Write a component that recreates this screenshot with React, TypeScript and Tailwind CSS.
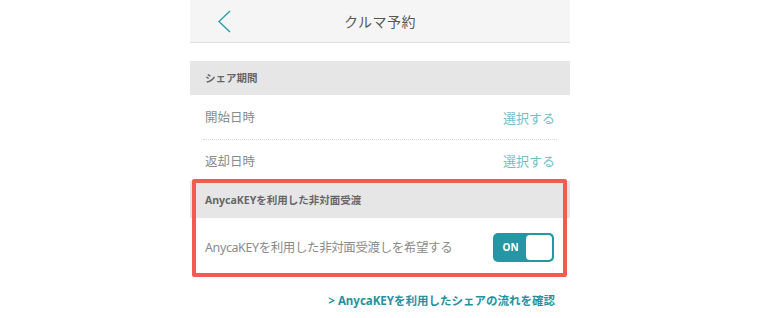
import React from "react";

const font = { fontFamily: '"Noto Sans", "Noto Sans CJK JP", sans-serif' };

export default function App() {
  return (
    <div className="w-[760px] h-[318px] bg-white flex justify-center overflow-hidden" style={font}>
      <div className="relative w-[380px]">
        <div className="h-[43px] bg-[#f5f5f5] border-b border-[#dedede] flex items-center justify-center relative">
          <svg className="absolute left-[27px] top-[10px]" width="15" height="23" viewBox="0 0 15 23">
            <path d="M13 1 L2 11.5 L13 22" fill="none" stroke="#2a9fac" strokeWidth="1.4" />
          </svg>
          <span className="text-[14px] text-[#555] tracking-[0.5px]">クルマ予約</span>
        </div>
        <div className="mt-[18px] h-[34px] bg-[#e6e6e6] px-[15px] pt-[2px] flex items-center text-[10.5px] font-bold text-[#666]">
          シェア期間
        </div>
        <div className="mx-[13px] h-[45px] pt-[3px] border-b border-dotted border-[#d8d8d8] flex items-center justify-between px-[2px]">
          <span className="text-[12.5px] text-[#8a8a8a]">開始日時</span>
          <span className="text-[13px] text-[#6fc1c9]">選択する</span>
        </div>
        <div className="mx-[13px] h-[41px] pt-[3px] flex items-center justify-between px-[2px]">
          <span className="text-[12.5px] text-[#8a8a8a]">返却日時</span>
          <span className="text-[13px] text-[#6fc1c9]">選択する</span>
        </div>
        <div className="h-[37px] bg-[#e6e6e6] px-[15px] pt-[2px] flex items-center text-[10.5px] font-bold text-[#666]">
          AnycaKEYを利用した非対面受渡
        </div>
        <div className="h-[58px] px-[15px] flex items-center justify-between">
          <span className="text-[12.5px] text-[#8a8a8a] tracking-[-0.4px] pt-[3px]">AnycaKEYを利用した非対面受渡しを希望する</span>
          <div className="w-[61px] h-[29px] rounded-[5px] bg-[#2596a3] p-[2px] flex mr-[1px]">
            <div className="flex-1 flex items-center justify-center text-white text-[10px] font-bold">ON</div>
            <div className="w-[26px] h-[25px] bg-white rounded-[4px]"></div>
          </div>
        </div>
        <div className="mt-[16px] px-[15px] flex justify-end">
          <span className="text-[11.5px] font-bold text-[#1f93a2]">&gt; AnycaKEYを利用したシェアの流れを確認</span>
        </div>
        <div className="absolute left-[2px] top-[179px] w-[375px] h-[98px] border-4 border-[#f25b50] rounded-[2px] pointer-events-none"></div>
      </div>
    </div>
  );
}
